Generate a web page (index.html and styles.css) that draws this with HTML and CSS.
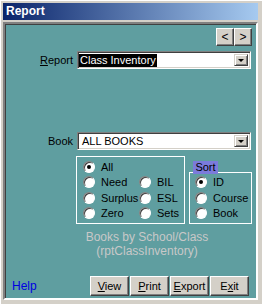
FILE: index.html
```html
<!DOCTYPE html>
<html lang="en">
<head>
  <meta charset="UTF-8" />
  <title>Report</title>
  <link rel="stylesheet" href="styles.css">
</head>
<body>
  <div class="window">
    <div class="titlebar">Report</div>
    <div class="panel">
      <div class="nav">
        <button class="btn nav-btn">&lt;</button><button class="btn nav-btn">&gt;</button>
      </div>

      <div class="row report-row">
        <label class="field-label"><u>R</u>eport</label>
        <div class="combo">
          <span class="combo-text selected">Class Inventory</span>
          <span class="combo-arrow"></span>
        </div>
      </div>

      <div class="row book-row">
        <label class="field-label">Book</label>
        <div class="combo">
          <span class="combo-text">ALL BOOKS</span>
          <span class="combo-arrow"></span>
        </div>
      </div>

      <div class="options">
        <div class="group filter-group">
          <div class="opt"><span class="radio checked"></span>All</div>
          <div class="opt"></div>
          <div class="opt"><span class="radio"></span>Need</div>
          <div class="opt"><span class="radio"></span>BIL</div>
          <div class="opt"><span class="radio"></span>Surplus</div>
          <div class="opt"><span class="radio"></span>ESL</div>
          <div class="opt"><span class="radio"></span>Zero</div>
          <div class="opt"><span class="radio"></span>Sets</div>
        </div>
        <div class="group sort-group">
          <span class="sort-label">Sort</span>
          <div class="opt"><span class="radio checked"></span>ID</div>
          <div class="opt"><span class="radio"></span>Course</div>
          <div class="opt"><span class="radio"></span>Book</div>
        </div>
      </div>

      <div class="desc">
        <div>Books by School/Class</div>
        <div>(rptClassInventory)</div>
      </div>

      <div class="footer">
        <span class="help">Help</span>
        <div class="actions">
          <button class="btn act-btn"><u>V</u>iew</button>
          <button class="btn act-btn"><u>P</u>rint</button>
          <button class="btn act-btn"><u>E</u>xport</button>
          <button class="btn act-btn">E<u>x</u>it</button>
        </div>
      </div>
    </div>
  </div>
</body>
</html>
```

FILE: styles.css
```css
body {
  margin: 0;
  background: #d4d0c8;
  font-family: 'Liberation Sans', Arial, sans-serif;
  font-size: 11px;
  color: #000;
}

.window {
  width: 262px;
  height: 304px;
  box-sizing: border-box;
  padding: 2px 4px 0 2px;
  border-left: 1px solid #fff;
  border-top: 1px solid #fff;
}

.titlebar {
  height: 17px;
  line-height: 17px;
  padding-left: 3px;
  color: #fff;
  font-weight: bold;
  font-size: 12px;
  background: linear-gradient(to right, #0a246a, #a6caf0);
}

.panel {
  margin-top: 2px;
  height: 278px;
  box-sizing: border-box;
  background: #5f9ea0;
  border: 2px solid;
  border-color: #808080 #fff #fff #808080;
  box-shadow: inset 1px 1px 0 #404040;
  padding: 4px 4px 0 0;
}

.btn {
  box-sizing: border-box;
  background: #d4d0c8;
  border: 1px solid;
  border-color: #fff #404040 #404040 #fff;
  box-shadow: inset -1px -1px 0 #808080;
  font-family: inherit;
  font-size: 11px;
  color: #000;
  padding: 0;
  margin: 0;
}

.nav {
  display: flex;
  justify-content: flex-end;
}

.nav-btn {
  flex: none;
  width: 18px;
  height: 18px;
  font-size: 12px;
}

.row {
  display: flex;
  align-items: center;
}

.report-row {
  margin-top: 5px;
}

.book-row {
  margin-top: 63px;
}

.field-label {
  width: 68px;
  margin-right: 4px;
  text-align: right;
}

.combo {
  width: 174px;
  height: 18px;
  box-sizing: border-box;
  background: #fff;
  border: 1px solid;
  border-color: #808080 #fff #fff #808080;
  box-shadow: inset 1px 1px 0 #404040, inset -1px -1px 0 #d4d0c8;
  display: flex;
  align-items: center;
  padding-left: 1px;
}

.combo-text {
  line-height: 13px;
  padding-left: 3px;
}

.combo-text.selected {
  background: #000;
  color: #fff;
  padding: 0 1px 0 1px;
}

.combo-arrow {
  margin-left: auto;
  margin-right: 2px;
  width: 14px;
  height: 12px;
  box-sizing: border-box;
  background: #d4d0c8;
  border: 1px solid;
  border-color: #d4d0c8 #404040 #404040 #d4d0c8;
  box-shadow: inset 1px 1px 0 #fff, inset -1px -1px 0 #808080;
  display: flex;
  align-items: center;
  justify-content: center;
}

.combo-arrow::after {
  content: '';
  border-left: 3px solid transparent;
  border-right: 3px solid transparent;
  border-top: 3px solid #000;
  margin-top: 1px;
}

.options {
  display: flex;
  align-items: flex-end;
  margin-top: 6px;
  padding-left: 71px;
  gap: 4px;
}

.group {
  border: 1px solid #fff;
  box-sizing: border-box;
  display: grid;
  grid-auto-rows: 15.5px;
  align-items: center;
}

.filter-group {
  width: 109px;
  height: 68px;
  padding: 2px 0 0 6px;
  grid-template-columns: 56px 1fr;
}

.sort-group {
  position: relative;
  width: 63px;
  height: 52px;
  padding: 1.5px 0 0 5px;
}

.sort-label {
  position: absolute;
  left: 3px;
  top: -12px;
  width: 25px;
  height: 13px;
  line-height: 13px;
  text-align: center;
  background: #7b7bdb;
}

.opt {
  display: flex;
  align-items: center;
  white-space: nowrap;
}

.radio {
  position: relative;
  width: 12px;
  height: 12px;
  box-sizing: border-box;
  border-radius: 50%;
  background: #fff;
  border: 1px solid;
  border-color: #808080 #fff #fff #808080;
  box-shadow: inset 1px 1px 0 #404040;
  margin-right: 6px;
  flex: none;
}

.radio.checked::after {
  content: '';
  position: absolute;
  left: 3px;
  top: 3px;
  width: 4px;
  height: 4px;
  border-radius: 50%;
  background: #000;
}

.desc {
  margin-top: 6px;
  padding-left: 37px;
  text-align: center;
  color: #c8c8c8;
  font-size: 12px;
  line-height: 14px;
}

.footer {
  margin-top: 18px;
  display: flex;
  align-items: center;
  justify-content: space-between;
  padding-left: 7px;
  padding-right: 3px;
}

.help {
  color: #0000e0;
  font-size: 12px;
}

.actions {
  display: flex;
  gap: 1px;
}

.act-btn {
  width: 39px;
  height: 20px;
}
```
